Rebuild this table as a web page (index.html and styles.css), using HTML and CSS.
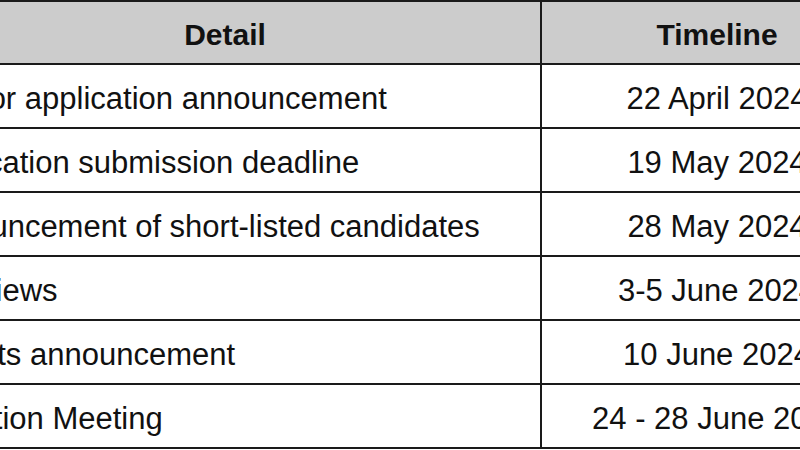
FILE: index.html
```html
<!DOCTYPE html>
<html lang="en">
<head>
<meta charset="utf-8">
<title>Timeline</title>
<link rel="stylesheet" href="styles.css">
</head>
<body>
<div class="sheet">
  <div class="cell head detail">Detail</div>
  <div class="cell head time">Timeline</div>

  <div class="cell detail">Call for application announcement</div>
  <div class="cell time">22 April 2024</div>

  <div class="cell detail">Application submission deadline</div>
  <div class="cell time">19 May 2024</div>

  <div class="cell detail">Announcement of short-listed candidates</div>
  <div class="cell time">28 May 2024</div>

  <div class="cell detail">Interviews</div>
  <div class="cell time">3-5 June 2024</div>

  <div class="cell detail">Results announcement</div>
  <div class="cell time">10 June 2024</div>

  <div class="cell detail">Induction Meeting</div>
  <div class="cell time">24 - 28 June 2024</div>
</div>
</body>
</html>
```
FILE: styles.css
```css
html, body {
  margin: 0;
  padding: 0;
  background: #ffffff;
  overflow: hidden;
}

.sheet {
  display: grid;
  grid-template-columns: 632px 350px;
  grid-template-rows: 63px;
  grid-auto-rows: 64px;
  margin-left: -90px;
  width: 982px;
  border-top: 2px solid #1a1a1a;
  font-family: "Liberation Sans", Arial, sans-serif;
  font-size: 31px;
  color: #111111;
}

.cell {
  box-sizing: border-box;
  display: flex;
  align-items: center;
  border-bottom: 2px solid #1a1a1a;
  padding-top: 5px;
  white-space: nowrap;
}

.detail {
  border-right: 2px solid #1a1a1a;
  padding-left: 8px;
}

.time {
  justify-content: center;
}

.head {
  background: #cccccc;
  font-size: 30px;
  font-weight: bold;
  justify-content: center;
  padding-left: 0;
  padding-top: 4px;
}
```
